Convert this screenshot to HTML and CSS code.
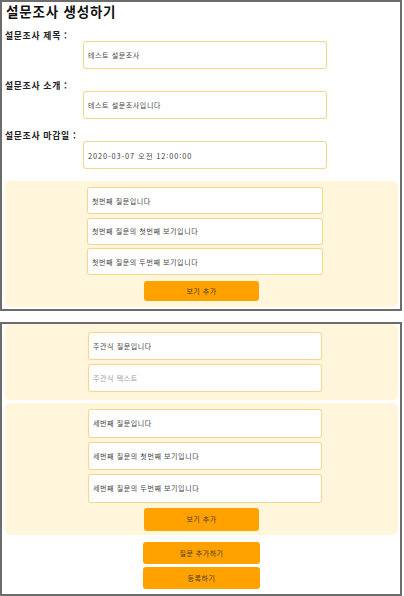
FILE: index.html
```html
<!DOCTYPE html>
<html lang="ko">
<head>
<meta charset="utf-8">
<link rel="stylesheet" href="styles.css">
</head>
<body>
<div class="panel panel-top">
  <h1 class="title">설문조사 생성하기</h1>
  <div class="fields">
    <div class="field">
      <label class="label">설문조사 제목 :</label>
      <input class="input main-input" value="테스트 설문조사">
    </div>
    <div class="field">
      <label class="label">설문조사 소개 :</label>
      <input class="input main-input" value="테스트 설문조사입니다">
    </div>
    <div class="field">
      <label class="label">설문조사 마감일 :</label>
      <input class="input main-input date" value="2020-03-07 오전 12:00:00">
    </div>
  </div>
  <div class="qbox qbox-1">
    <input class="input q-input" value="첫번째 질문입니다">
    <input class="input q-input" value="첫번째 질문의 첫번째 보기입니다">
    <input class="input q-input" value="첫번째 질문의 두번째 보기입니다">
    <button class="btn">보기 추가</button>
  </div>
</div>

<div class="panel panel-bottom">
  <div class="qbox qbox-2">
    <input class="input q-input" value="주관식 질문입니다">
    <input class="input q-input" placeholder="주관식 텍스트">
  </div>
  <div class="qbox qbox-3">
    <input class="input q-input" value="세번째 질문입니다">
    <input class="input q-input" value="세번째 질문의 첫번째 보기입니다">
    <input class="input q-input" value="세번째 질문의 두번째 보기입니다">
    <button class="btn btn-tall">보기 추가</button>
  </div>
  <div class="actions">
    <button class="btn btn-action">질문 추가하기</button>
    <button class="btn btn-action">등록하기</button>
  </div>
</div>
</body>
</html>
```

FILE: styles.css
```css
* { box-sizing: border-box; }

html, body {
  margin: 0;
  padding: 0;
  background: #ffffff;
  font-family: "Noto Sans CJK KR", "Noto Sans", sans-serif;
  color: #111;
}

body {
  width: 404px;
}

.panel {
  width: 402px;
  border: 2px solid #6c6c6c;
  padding: 0 2px 0 3px;
  display: flex;
  flex-direction: column;
}

.panel-top {
  height: 311px;
}

.panel-bottom {
  margin-top: 11px;
  height: 274px;
}

.title {
  margin: 0;
  height: 18px;
  line-height: 18px;
  font-size: 13.5px;
  font-weight: 700;
  letter-spacing: 0.8px;
  padding-left: 1px;
}

.fields {
  margin-top: 11px;
  display: flex;
  flex-direction: column;
  gap: 12px;
}

.field {
  display: flex;
  flex-direction: column;
}

.label {
  height: 10px;
  line-height: 10px;
  font-size: 8.8px;
  font-weight: 700;
  letter-spacing: 0.7px;
  color: #222;
}

.input {
  display: block;
  border: 1px solid #f3d78e;
  border-radius: 3px;
  background: #fff;
  font-family: "Noto Sans CJK KR", "Noto Sans", sans-serif;
  font-size: 7px;
  letter-spacing: 0.6px;
  color: #444;
  padding: 0 0 0 4px;
  outline: none;
  box-shadow: 0 0 1px rgba(240, 200, 100, 0.35);
}

.input::placeholder {
  color: #9a9a9a;
}

.main-input {
  margin-left: 78px;
  width: 244px;
  height: 28px;
}

.date {
  letter-spacing: 0.9px;
  font-size: 7.4px;
}

.qbox {
  background: #fff6dc;
  border-radius: 5px;
  display: flex;
  flex-direction: column;
  align-items: flex-start;
}

.qbox-1 {
  margin-top: 12px;
  padding: 6px 0 6px 0;
  gap: 3.5px;
}

.qbox-1 .q-input {
  height: 27px;
}

.qbox-2 {
  padding: 8px 0 8px 0;
  gap: 4px;
}

.qbox-2 .q-input {
  height: 28px;
}

.qbox-3 {
  margin-top: 3px;
  padding: 6px 0 4px 0;
  gap: 4px;
}

.qbox-3 .q-input {
  height: 28.5px;
}

.q-input {
  margin-left: 82px;
  width: 236px;
}

.qbox-2 .q-input, .qbox-3 .q-input {
  margin-left: 83px;
  width: 234px;
}

.btn {
  align-self: center;
  width: 115px;
  height: 20px;
  border: none;
  border-radius: 3px;
  background: #ffa200;
  color: #4a3a1e;
  font-family: "Noto Sans CJK KR", "Noto Sans", sans-serif;
  font-size: 7px;
  letter-spacing: 0.5px;
  padding: 0;
  margin-top: 2.5px;
}

.btn-tall {
  height: 23px;
  margin-top: 1px;
}

.actions {
  margin-top: 7px;
  display: flex;
  flex-direction: column;
  align-items: center;
  gap: 3px;
}

.btn-action {
  width: 117px;
  height: 22px;
  margin-top: 0;
}
```
